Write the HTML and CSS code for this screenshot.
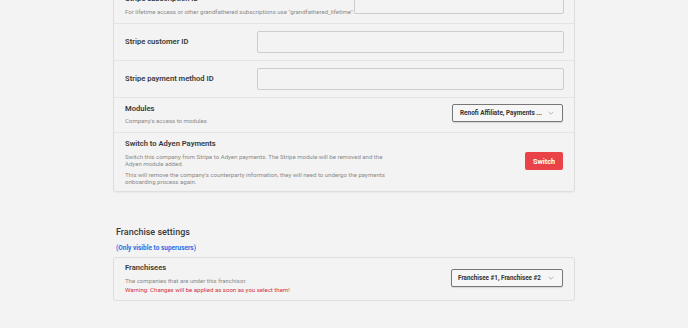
FILE: index.html
```html
<!DOCTYPE html>
<html lang="en">
<head>
<meta charset="utf-8">
<title>Company settings</title>
<link rel="stylesheet" href="styles.css">
</head>
<body>
<div class="page">
  <section class="card card-main">
    <div class="row row-sub">
      <div class="info info-sub">
        <div class="title">Stripe subscription ID</div>
        <div class="desc">For lifetime access or other grandfathered subscriptions use "grandfathered_lifetime".</div>
      </div>
      <input class="field field-sub" type="text">
    </div>
    <div class="row row-field">
      <div class="label">Stripe customer ID</div>
      <input class="field field-wide" type="text">
    </div>
    <div class="row row-field">
      <div class="label">Stripe payment method ID</div>
      <input class="field field-wide" type="text">
    </div>
    <div class="row row-modules">
      <div class="info">
        <div class="title">Modules</div>
        <div class="desc">Company's access to modules</div>
      </div>
      <div class="select"><span class="select-text">Renofi Affiliate, Payments ...</span><svg class="chev" viewBox="0 0 10 6" width="6" height="4"><path d="M1 1l4 4 4-4" fill="none" stroke="#9a9a9a" stroke-width="1.2"/></svg></div>
    </div>
    <div class="row row-switch">
      <div class="info info-narrow">
        <div class="title">Switch to Adyen Payments</div>
        <div class="desc">Switch this company from Stripe to Adyen payments. The Stripe module will be removed and the Adyen module added.</div>
        <div class="desc desc-para">This will remove the company's counterparty information, they will need to undergo the payments onboarding process again.</div>
      </div>
      <button class="btn-danger" type="button">Switch</button>
    </div>
  </section>

  <h2 class="section-title">Franchise settings</h2>
  <p class="su-note">(Only visible to superusers)</p>

  <section class="card card-franchise">
    <div class="row row-franchise">
      <div class="info">
        <div class="title">Franchisees</div>
        <div class="desc">The companies that are under this franchisor.</div>
        <div class="desc warn">Warning: Changes will be applied as soon as you select them!</div>
      </div>
      <div class="select select-fr"><span class="select-text">Franchisee #1, Franchisee #2</span><svg class="chev" viewBox="0 0 10 6" width="6" height="4"><path d="M1 1l4 4 4-4" fill="none" stroke="#9a9a9a" stroke-width="1.2"/></svg></div>
    </div>
  </section>
</div>
</body>
</html>
```
FILE: styles.css
```css
* { box-sizing: border-box; }
html, body { margin: 0; padding: 0; }
body {
  background: #f3f3f3;
  font-family: Roboto, "Noto Sans", sans-serif;
  color: #383838;
  overflow: hidden;
}
.page {
  width: 462px;
  margin: -15px auto 0;
}
.card {
  border: 1px solid #dedede;
  border-radius: 3px;
  background: #f3f3f3;
  box-shadow: 0 1px 1px rgba(0,0,0,0.04);
}
.row {
  display: flex;
  align-items: center;
  justify-content: space-between;
  padding: 7px 11px;
  border-bottom: 1px solid #e4e4e4;
}
.row:last-child { border-bottom: none; }
.title, .label {
  font-size: 7.6px;
  font-weight: 600;
  line-height: 12px;
  color: #383838;
  white-space: nowrap;
}
.label { flex: 0 0 132px; }
.desc {
  font-size: 6.05px;
  line-height: 7px;
  margin-top: 2.5px;
  color: #8a8a8a;
}
.info-sub .desc { white-space: nowrap; }
.desc-para { margin-top: 4px; }
.warn { color: #d2343c; margin-top: 2.5px; }
.field {
  display: block;
  flex: none;
  height: 22px;
  border: 1px solid #cdcdcd;
  border-radius: 2px;
  background: #f3f3f3;
  outline: none;
}
.field-sub { width: 210px; height: 21px; }
.field-wide { width: 307px; }
.row-sub { padding: 7px 11px 8px; }
.row-modules { padding: 5px 11px 8px; }
.row-switch { padding: 5px 11px 6px; }
.info-narrow { width: 266px; }
.select {
  display: flex;
  flex: none;
  align-items: center;
  justify-content: space-between;
  width: 111px;
  height: 18px;
  padding: 0 8px 0 7px;
  border: 1px solid #777;
  border-radius: 2px;
  background: #f6f6f6;
  box-shadow: 0 1px 1px rgba(0,0,0,0.12);
  overflow: hidden;
}
.select-fr { width: 112px; padding-left: 6px; }
.select-text {
  font-size: 6.4px;
  font-weight: 700;
  color: #333;
  white-space: nowrap;
}
.select-fr .select-text { font-size: 6.3px; }
.chev { display: block; flex: none; }
.btn-danger {
  flex: none;
  width: 38px;
  height: 18px;
  border: none;
  border-radius: 2px;
  background: #ea4249;
  color: #fff;
  font-family: inherit;
  font-size: 7.3px;
  font-weight: 700;
  padding: 0;
  cursor: pointer;
}
.section-title {
  margin: 33px 0 0 3px;
  font-size: 9px;
  line-height: 14px;
  font-weight: 500;
  color: #3a3a3a;
}
.su-note {
  margin: 5px 0 0 3px;
  font-size: 6.5px;
  line-height: 9px;
  font-weight: 700;
  color: #2b6ee6;
}
.card-franchise { margin-top: 4px; }
.row-franchise { padding: 4.5px 11px 6.5px; }
```
